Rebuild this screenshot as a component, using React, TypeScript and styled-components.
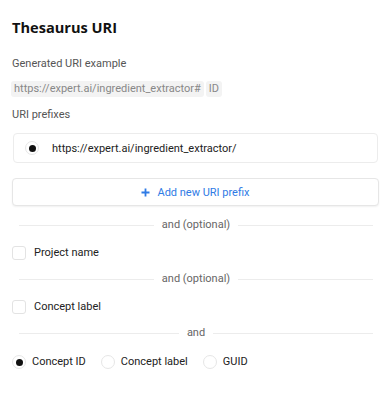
import React, { useState } from 'react'
import styled, { createGlobalStyle } from 'styled-components'

const GlobalStyle = createGlobalStyle`
  body {
    margin: 0;
    background: #fff;
    font-family: Roboto, 'Open Sans', sans-serif;
    color: #222;
  }
`

const Panel = styled.div`
  display: flex;
  flex-direction: column;
  padding: 0 7px 0 12px;
  width: 386px;
  box-sizing: border-box;
`

const Title = styled.h2`
  margin: 18px 0 0;
  font-family: 'Open Sans', sans-serif;
  font-size: 14.6px;
  line-height: 18px;
  font-weight: 700;
  color: #111;
`

const FieldLabel = styled.div<{ $top: number }>`
  margin-top: ${p => p.$top}px;
  font-size: 11px;
  line-height: 16px;
  color: #555;
`

const ChipRow = styled.div`
  display: flex;
  gap: 2px;
  margin: 9px 0 0 -1px;
`

const Chip = styled.span`
  background: #f3f3f3;
  color: #888;
  font-size: 11px;
  line-height: 16px;
  padding: 0 3px;
  border-radius: 3px;
`

const PrefixCard = styled.div`
  display: flex;
  align-items: center;
  gap: 13px;
  height: 30px;
  margin: 10px 1px 0;
  padding: 0 11px;
  border: 1px solid #ececec;
  border-radius: 4px;
  box-sizing: border-box;
  font-size: 11px;
  color: #222;
`

const AddButton = styled.button`
  display: flex;
  align-items: center;
  justify-content: center;
  gap: 7px;
  height: 28px;
  margin-top: 15px;
  border: 1px solid #e6e6e6;
  border-radius: 4px;
  background: #fff;
  box-shadow: 0 1px 2px rgba(0, 0, 0, 0.06);
  color: #2f7be5;
  font-family: inherit;
  font-size: 11px;
  cursor: pointer;
`

const Divider = styled.div<{ $top: number }>`
  display: flex;
  align-items: center;
  gap: 8px;
  margin: ${p => p.$top}px 6px 0 7px;
  font-size: 11px;
  line-height: 16px;
  color: #666;

  &::before,
  &::after {
    content: '';
    flex: 1;
    height: 1px;
    background: #ececec;
  }
`

const OptionRow = styled.label<{ $top: number }>`
  display: flex;
  align-items: center;
  gap: 8px;
  margin-top: ${p => p.$top}px;
  font-size: 11px;
  line-height: 16px;
  color: #222;
  cursor: pointer;
`

const CheckBox = styled.span`
  width: 14px;
  height: 14px;
  border: 1px solid #e3e3e3;
  border-radius: 3px;
  box-sizing: border-box;
  background: #fff;
`

const RadioGroup = styled.div`
  display: flex;
  align-items: center;
  gap: 15px;
  margin-top: 13px;
`

const RadioOption = styled.label`
  display: flex;
  align-items: center;
  gap: 6px;
  font-size: 11px;
  line-height: 16px;
  color: #222;
  cursor: pointer;
`

const RadioCircle = styled.span<{ $checked?: boolean }>`
  display: flex;
  align-items: center;
  justify-content: center;
  width: 14px;
  height: 14px;
  border: 1px solid #e6e6e6;
  border-radius: 50%;
  box-sizing: border-box;
  background: #fff;

  &::after {
    content: '';
    width: 7px;
    height: 7px;
    border-radius: 50%;
    background: ${p => (p.$checked ? '#111' : 'transparent')};
  }
`

const PlusIcon = () => (
  <svg width="9" height="9" viewBox="0 0 9 9">
    <path d="M4.5 0.5v8M0.5 4.5h8" stroke="currentColor" strokeWidth="1.8" />
  </svg>
)

const idOptions = ['Concept ID', 'Concept label', 'GUID']

const App: React.FC = () => {
  const [idType, setIdType] = useState('Concept ID')

  return (
    <>
      <GlobalStyle />
      <Panel>
        <Title>Thesaurus URI</Title>

        <FieldLabel $top={20}>Generated URI example</FieldLabel>
        <ChipRow>
          <Chip>https://expert.ai/ingredient_extractor#</Chip>
          <Chip>ID</Chip>
        </ChipRow>

        <FieldLabel $top={10}>URI prefixes</FieldLabel>
        <PrefixCard>
          <RadioCircle $checked />
          https://expert.ai/ingredient_extractor/
        </PrefixCard>

        <AddButton>
          <PlusIcon />
          Add new URI prefix
        </AddButton>

        <Divider $top={11}>and (optional)</Divider>
        <OptionRow $top={12}>
          <CheckBox />
          Project name
        </OptionRow>

        <Divider $top={10}>and (optional)</Divider>
        <OptionRow $top={12}>
          <CheckBox />
          Concept label
        </OptionRow>

        <Divider $top={10}>and</Divider>
        <RadioGroup>
          {idOptions.map(opt => (
            <RadioOption key={opt} onClick={() => setIdType(opt)}>
              <RadioCircle $checked={idType === opt} />
              {opt}
            </RadioOption>
          ))}
        </RadioGroup>
      </Panel>
    </>
  )
}

export default App
